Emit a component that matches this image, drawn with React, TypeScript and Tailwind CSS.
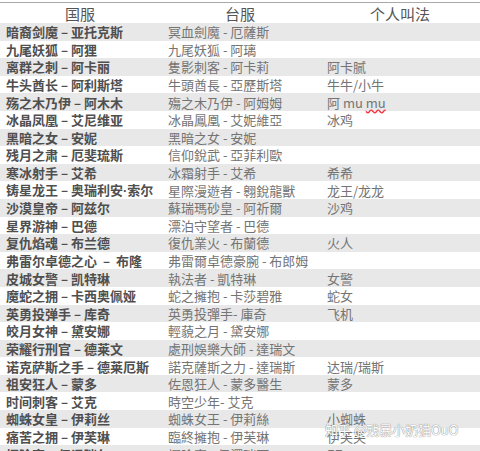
import React from "react";

type Row = {
  cn: React.ReactNode;
  tw: string;
  nick?: React.ReactNode;
};

const dot = <span style={{ fontFamily: '"Liberation Sans", sans-serif' }}>·</span>;

const rows: Row[] = [
  { cn: "暗裔剑魔 – 亚托克斯", tw: "冥血劍魔 - 厄薩斯" },
  { cn: "九尾妖狐 – 阿狸", tw: "九尾妖狐 - 阿璃" },
  { cn: "离群之刺 – 阿卡丽", tw: "隻影刺客 - 阿卡莉", nick: "阿卡腻" },
  { cn: "牛头酋长 – 阿利斯塔", tw: "牛頭酋長 - 亞歷斯塔", nick: "牛牛/小牛" },
  {
    cn: "殇之木乃伊 – 阿木木",
    tw: "殤之木乃伊 - 阿姆姆",
    nick: (
      <>
        阿 mu <span className="underline decoration-wavy decoration-red-500">mu</span>
      </>
    ),
  },
  { cn: "冰晶凤凰 – 艾尼维亚", tw: "冰晶鳳凰 - 艾妮維亞", nick: "冰鸡" },
  { cn: "黑暗之女 – 安妮", tw: "黑暗之女 - 安妮" },
  { cn: "残月之肃 – 厄斐琉斯", tw: "信仰銳武 - 亞菲利歐" },
  { cn: "寒冰射手 – 艾希", tw: "冰霜射手 - 艾希", nick: "希希" },
  {
    cn: <>铸星龙王 – 奥瑞利安{dot}索尔</>,
    tw: "星際漫遊者 - 翱銳龍獸",
    nick: "龙王/龙龙",
  },
  { cn: "沙漠皇帝 – 阿兹尔", tw: "蘇瑞瑪砂皇 - 阿祈爾", nick: "沙鸡" },
  { cn: "星界游神 – 巴德", tw: "漂泊守望者 - 巴德" },
  { cn: "复仇焰魂 – 布兰德", tw: "復仇業火 - 布蘭德", nick: "火人" },
  { cn: "弗雷尔卓德之心\u00a0\u00a0–\u00a0\u00a0布隆", tw: "弗雷爾卓德豪腕 - 布郎姆" },
  { cn: "皮城女警 – 凯特琳", tw: "執法者 - 凱特琳", nick: "女警" },
  { cn: "魔蛇之拥 – 卡西奥佩娅", tw: "蛇之擁抱 - 卡莎碧雅", nick: "蛇女" },
  { cn: "英勇投弹手 – 库奇", tw: "英勇投彈手- 庫奇", nick: "飞机" },
  { cn: "皎月女神 – 黛安娜", tw: "輕藐之月 - 黛安娜" },
  { cn: "荣耀行刑官 – 德莱文", tw: "處刑娛樂大師 - 達瑞文" },
  { cn: "诺克萨斯之手 – 德莱厄斯", tw: "諾克薩斯之力 - 達瑞斯", nick: "达瑞/瑞斯" },
  { cn: "祖安狂人 – 蒙多", tw: "佐恩狂人 - 蒙多醫生", nick: "蒙多" },
  { cn: "时间刺客 – 艾克", tw: "時空少年- 艾克" },
  { cn: "蜘蛛女皇 – 伊莉丝", tw: "蜘蛛女王 - 伊莉絲", nick: "小蜘蛛" },
  { cn: "痛苦之拥 – 伊芙琳", tw: "臨終擁抱 - 伊芙琳", nick: "伊芙芙" },
  { cn: "探险家 – 伊泽瑞尔", tw: "探險家 - 伊澤瑞爾", nick: "EZ" },
];

export default function App() {
  return (
    <div
      className="relative w-[480px] h-[451px] overflow-hidden bg-white"
      style={{ fontFamily: '"Noto Sans CJK SC", "Noto Sans", sans-serif' }}
    >
      <div className="h-[2px] bg-white" />
      <div className="h-px bg-[#a9a9a9]" />
      {/* header */}
      <div className="grid grid-cols-3 h-[20px] items-center text-[15px] leading-none text-[#555]">
        <div className="text-center">国服</div>
        <div className="text-center">台服</div>
        <div className="text-center">个人叫法</div>
      </div>

      {rows.map((r, idx) => (
        <div
          key={idx}
          className={
            "grid grid-cols-3 h-[17.6px] items-center text-[13px] leading-none " +
            (idx % 2 === 0 ? "bg-[#e8e8e8]" : "bg-white")
          }
        >
          <div className="pl-[6px] font-semibold text-[#4f4f4f] whitespace-nowrap">{r.cn}</div>
          <div
            className="pl-[8px] text-[#747474] whitespace-nowrap"
            style={{ fontFamily: '"Noto Sans CJK TC", "Noto Sans", sans-serif' }}
          >
            {r.tw}
          </div>
          <div className="pl-[7px] text-[#747474] whitespace-nowrap">{r.nick}</div>
        </div>
      ))}

      {/* watermark */}
      <div
        className="absolute left-[325px] top-[423px] text-[13px] leading-none text-white whitespace-nowrap"
        style={{ textShadow: "0 0 1px #888, 0 0 1px #888" }}
      >
        知乎 @残暴小奶猫OuO
      </div>
    </div>
  );
}
